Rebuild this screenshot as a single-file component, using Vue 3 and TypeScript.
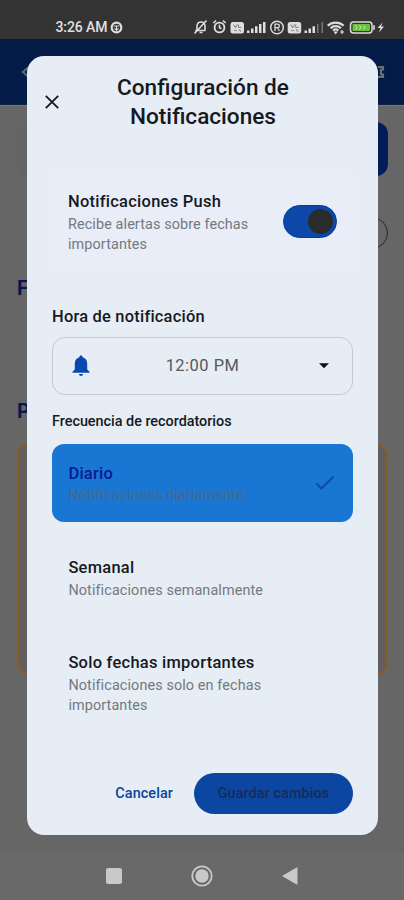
<script setup lang="ts">
import { ref } from 'vue'

interface Option {
  id: string
  title: string
  detail: string
}

const options: Option[] = [
  { id: 'daily', title: 'Diario', detail: 'Notificaciones diariamente' },
  { id: 'weekly', title: 'Semanal', detail: 'Notificaciones semanalmente' },
  { id: 'dates', title: 'Solo fechas importantes', detail: 'Notificaciones solo en fechas importantes' },
]
const selected = ref('daily')
const push = ref(true)
</script>

<template>
  <div class="screen">
    <header class="status">
      <div class="clock">
        <span>3:26 AM</span>
        <svg width="13" height="13" viewBox="0 0 13 13" fill="none" stroke="#dedede">
          <circle cx="6.5" cy="6.5" r="4.8" stroke-width="2.2" />
          <path d="M3.500 5h6M6.500 5v5M4.500 7.500l2 1.500 2-1.500" stroke-width="1.100" />
        </svg>
      </div>
      <svg class="indicators" width="194" height="18" viewBox="0 0 194 18" fill="none" stroke="#dcdcdc">
        <g stroke-width="1.600">
          <path d="M2.200 12.500h10.300M4 12V8.500C4 5.500 5.500 4 8 4s4 1.800 4 4.500V12M6.500 14.500h3M13.500 2.500L1.500 15.500" />
          <circle cx="26.500" cy="9.500" r="4.900" stroke-width="1.900" />
          <path d="M26.500 6.700v3l2 1M20.300 5l2.800-2.400M32.700 5l-2.800-2.400" />
        </g>
        <g fill="#dedede" stroke="none">
          <rect x="37.500" y="4" width="13.500" height="11.500" rx="2.500" />
          <rect x="94.700" y="4" width="13.500" height="11.500" rx="2.500" />
          <path d="M54 12.500h2.500V15H54zM58 10.500h2.500V15H58zM62 8.300h2.500V15H62zM66 6h2.500v9H66zM70 4h2.500v11H70z" />
          <path d="M111.500 12.500h2.500V15h-2.500zM115.500 10.500h2.500V15h-2.500zM119.500 8.300h2.500V15h-2.500z" />
          <path d="M124 6h1.500v9H124zM128.500 4h1.500v11h-1.500z" fill="#777" />
        </g>
        <g stroke="#8b8b8b" stroke-width="1.100">
          <path d="M40.500 6.500l2 3 2-3M45.500 6.500v3h3M41 12.500h3M46 11.500l2 2" />
          <path d="M97.700 6.500l2 3 2-3M102.700 6.500v3h3M98.200 12.500h3M103.200 11.500l2 2" />
        </g>
        <circle cx="84" cy="9.500" r="6.300" stroke-width="1.500" />
        <path d="M82 13V6.200h2.500c2.500 0 2.500 3.500 0 3.500H82M84.500 9.700l1.900 3.300" stroke-width="1.300" />
        <path d="M134.700 7.800c4.500-4.200 11.500-4.200 16 0M137.500 10.200c3-2.700 7.500-2.700 10.500 0M140 12.500c1.800-1.400 3.600-1.400 5.400 0" stroke-width="2.200" />
        <path d="M142.700 16.500l-2.200-3h4.400z" fill="#dedede" stroke="none" />
        <path d="M147 14h4M149 12v4" stroke-width="1.200" />
        <rect x="157.500" y="4" width="21.500" height="11" rx="3" stroke-width="1.500" />
        <rect x="159.500" y="6" width="17.500" height="7" rx="1" fill="#65c438" stroke="none" />
        <path d="M162.500 7.500l1.500 2-1.500 2M166.500 7.500l1.500 2-1.500 2M170.500 7.500l1.500 2-1.500 2" stroke="#d6f1c5" stroke-width="1" />
        <path d="M181 7.200v4.500" stroke-width="1.700" />
        <path d="M189.500 4.500l-5 5.500h3l-1.500 4.500 5-6h-3z" fill="#dedede" stroke="none" />
      </svg>
    </header>

    <div class="appbar">
      <svg width="16" height="16" viewBox="0 0 16 16"><path d="M8 3.500L3 8l5 4.500" fill="none" stroke="#53697a" stroke-width="2.200" /></svg>
      <svg width="16" height="16" viewBox="0 0 16 16"><path d="M8 3h5v2.500h-2v5h2V13H8" fill="none" stroke="#687276" stroke-width="2.200" /></svg>
    </div>

    <main class="page">
      <div class="hero"></div>
      <div class="chip"></div>
      <h2 class="first">F</h2>
      <h2 class="second">P</h2>
      <div class="panel"></div>
    </main>

    <footer class="keys">
      <svg width="16" height="16" viewBox="0 0 16 16"><rect width="16" height="16" rx="2.200" fill="#c9c9c9" /></svg>
      <svg width="22" height="22" viewBox="0 0 22 22"><circle cx="11" cy="11" r="9.700" fill="none" stroke="#c9c9c9" stroke-width="1.800" /><circle cx="11" cy="11" r="6.700" fill="#c9c9c9" /></svg>
      <svg width="16" height="18" viewBox="0 0 16 18"><path d="M15 .8v16.400L.8 9z" fill="#c9c9c9" stroke="#c9c9c9" stroke-linejoin="round" /></svg>
    </footer>

    <section class="dialog">
      <div class="head">
        <svg width="16" height="16" viewBox="0 0 16 16"><path d="M1.800 1.800l12.400 12.400M14.200 1.800L1.800 14.200" fill="none" stroke="#17191d" stroke-width="1.800" /></svg>
        <h1>Configuración de<br />Notificaciones</h1>
      </div>

      <div class="push">
        <div class="copy">
          <div class="title">Notificaciones Push</div>
          <div class="detail">Recibe alertas sobre fechas importantes</div>
        </div>
        <button class="toggle" :class="{ on: push }" @click="push = !push"><i></i></button>
      </div>

      <div class="title hour">Hora de notificación</div>
      <div class="field">
        <svg width="18" height="22" viewBox="0 0 18 22"><path d="M9 .5c1 0 1.600.7 1.600 1.700 3 .8 4.600 3.300 4.600 6.300v6l2.300 2.300v1H.5v-1l2.300-2.300v-6c0-3 1.600-5.500 4.600-6.300C7.400 1.200 8 .5 9 .5zM7 19h4c0 1.200-.8 2-2 2s-2-.8-2-2z" fill="#0b48ac" /></svg>
        <span>12:00 PM</span>
        <svg width="10" height="6" viewBox="0 0 10 6"><path d="M0 .3h10L5 5.300z" fill="#101216" /></svg>
      </div>

      <div class="caption">Frecuencia de recordatorios</div>
      <div class="options">
        <div v-for="o in options" :key="o.id" class="option" :class="{ selected: o.id === selected }" @click="selected = o.id">
          <div class="copy">
            <div class="title">{{ o.title }}</div>
            <div class="detail">{{ o.detail }}</div>
          </div>
          <svg v-if="o.id === selected" width="20" height="16" viewBox="0 0 20 16"><path d="M1.400 8.500l5 5L18.500 1.500" fill="none" stroke="#0b4dab" stroke-width="2" /></svg>
        </div>
      </div>

      <div class="actions">
        <button class="cancel">Cancelar</button>
        <button class="save">Guardar cambios</button>
      </div>
    </section>
  </div>
</template>

<style>
body {
  margin: 0;
}
</style>

<style scoped>
* {
  box-sizing: border-box;
}
.screen {
  position: relative;
  width: 404px;
  height: 900px;
  overflow: hidden;
  display: flex;
  flex-direction: column;
  background: #666;
  font-family: Roboto, sans-serif;
}
svg {
  display: block;
  flex: none;
}
button {
  border: 0;
  background: none;
  padding: 0;
  font: inherit;
}
.status {
  height: 39px;
  flex: none;
  background: #333;
  display: flex;
  justify-content: space-between;
  align-items: flex-start;
  padding: 17px 17px 0 55.5px;
}
.indicators {
  margin-top: 0.5px;
}
.clock {
  display: flex;
  align-items: center;
  gap: 3px;
  height: 20px;
  color: #e0e0e0;
  font-size: 14px;
  font-weight: 500;
  letter-spacing: -0.1px;
}
.appbar {
  height: 66px;
  flex: none;
  background: #041b47;
  border-bottom: 1px solid #0a2345;
  display: flex;
  justify-content: space-between;
  align-items: center;
  padding: 0 18px 0 20px;
}
.page {
  flex: 1;
  padding: 16px 16px 0 17px;
  border-top: 1px solid #747876;
}
.hero {
  height: 54px;
  border-radius: 12px;
  background: linear-gradient(90deg, #646464 50%, #041c58 50%);
}
.chip {
  width: 90px;
  height: 32px;
  margin: 41px 0 0 auto;
  border: 1.5px solid #2b2b2b;
  border-radius: 16px;
}
h2 {
  margin: 0;
  color: #06184e;
  font-size: 20px;
  line-height: 24px;
  font-weight: 700;
}
.first {
  margin-top: 27px;
}
.second {
  margin-top: 99px;
}
.panel {
  height: 234px;
  margin-top: 19px;
  border: 2px solid #8b5c24;
  border-radius: 14px;
  background: #625e60;
}
.keys {
  height: 48px;
  flex: none;
  background: #696969;
  display: flex;
  justify-content: space-between;
  align-items: center;
  padding: 0 106px;
}
.dialog {
  position: absolute;
  left: 27px;
  top: 56px;
  width: 351px;
  height: 779px;
  padding: 18px 25px 0;
  border-radius: 17px;
  background: #e6edf5;
  color: #16191e;
  display: flex;
  flex-direction: column;
}
.head {
  height: 58px;
  display: flex;
  align-items: center;
  margin-left: -8px;
}
.head svg {
  margin-bottom: 2px;
}
h1 {
  flex: 1;
  margin: 0;
  padding-right: 7px;
  font-size: 22.6px;
  line-height: 28.8px;
  font-weight: 500;
  text-align: center;
}
.push {
  display: flex;
  align-items: center;
  justify-content: space-between;
  height: 100px;
  margin-top: 40px;
  padding: 0 16px;
  background: #e8edf8;
}
.copy {
  width: 200px;
  padding-top: 1px;
  margin-bottom: -1px;
}
.title {
  font-size: 16.45px;
  line-height: 24.7px;
  font-weight: 500;
  letter-spacing: 0.27px;
}
.detail {
  font-size: 14.4px;
  line-height: 20.6px;
  letter-spacing: 0.11px;
  color: #74797f;
}
.toggle {
  width: 54px;
  height: 33px;
  margin-bottom: 2px;
  padding: 4px;
  border-radius: 17px;
  background: #8795ad;
  display: flex;
}
.toggle.on {
  background: #0d47a8;
  border: 1px solid #0239a5;
  padding: 3px;
  justify-content: flex-end;
}
.toggle i {
  width: 25px;
  height: 25px;
  border-radius: 50%;
  background: #292b2c;
}
.hour {
  margin-top: 32.6px;
  letter-spacing: 0.22px;
}
.field {
  height: 58px;
  margin-top: 7.4px;
  padding: 0 23px 0 19px;
  border: 1px solid #c3c9d1;
  border-radius: 13px;
  display: flex;
  align-items: center;
}
.field span {
  flex: 1;
  padding-right: 4px;
  text-align: center;
  color: #54595f;
  font-size: 16.45px;
  letter-spacing: 0.5px;
}
.caption {
  margin-top: 17px;
  font-size: 14.4px;
  line-height: 20.6px;
  font-weight: 500;
  letter-spacing: -0.01px;
}
.options {
  display: flex;
  flex-direction: column;
  gap: 16.5px;
  margin-top: 12px;
}
.option {
  display: flex;
  align-items: center;
  justify-content: space-between;
  padding: 16.4px 18px 16.4px 16.4px;
  border-radius: 12px;
}
.option.selected {
  background: #1976d2;
}
.selected .title {
  color: #051c93;
}
.selected .detail {
  color: #4b6887;
}
.actions {
  display: flex;
  align-items: center;
  justify-content: flex-end;
  gap: 21px;
  margin-top: 41px;
  font-size: 14.4px;
  font-weight: 500;
}
.cancel {
  color: #0b429f;
  letter-spacing: 0.1px;
}
.save {
  width: 159px;
  height: 41px;
  border-radius: 21px;
  background: #0c46a3;
  color: #172c52;
  letter-spacing: 0.1px;
}
</style>
